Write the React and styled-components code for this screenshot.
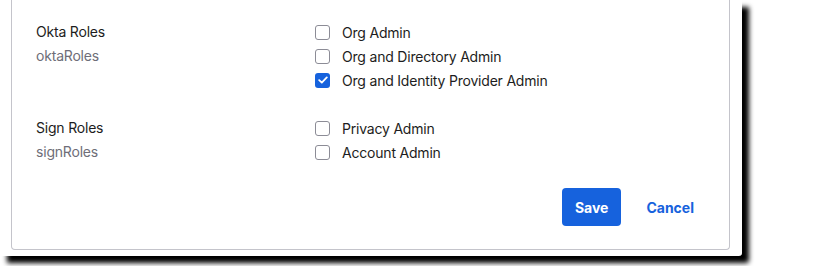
import React from 'react';
import styled, { createGlobalStyle } from 'styled-components';

const GlobalStyle = createGlobalStyle`
  html, body {
    margin: 0;
    min-height: 266px;
    background: #fff;
    font-family: Inter, "Noto Sans", "Liberation Sans", sans-serif;
  }
`;

const Page = styled.div`
  height: 266px;
`;

const Frame = styled.div`
  width: 742px;
  height: 256px;
  box-sizing: border-box;
  background: #fff;
  padding: 0 12px 6px 11px;
  display: flex;
  box-shadow: 7px 7px 5px #000;
  border-radius: 0 0 3px 0;
`;

const Card = styled.div`
  flex: 1;
  display: flex;
  flex-direction: column;
  border: 1px solid #c4c4cb;
  border-top: none;
  border-radius: 0 0 4px 4px;
  padding: 20px 22px 23px 24px;
`;

const Group = styled.div`
  display: grid;
  grid-template-columns: 279px 1fr;
  & + & {
    margin-top: 24px;
  }
`;

const Heading = styled.div`
  display: flex;
  flex-direction: column;
`;

const Title = styled.div`
  font-size: 14px;
  line-height: 24px;
  letter-spacing: -0.2px;
  color: #1d1d21;
`;

const Name = styled.div`
  font-size: 14px;
  line-height: 24px;
  letter-spacing: -0.2px;
  color: #6e6e78;
`;

const Options = styled.div`
  display: flex;
  flex-direction: column;
`;

const Option = styled.label`
  display: flex;
  align-items: center;
  gap: 12px;
  height: 24px;
  font-size: 14px;
  letter-spacing: -0.2px;
  color: #1d1d21;
`;

const Box = styled.span`
  width: 15px;
  height: 15px;
  box-sizing: border-box;
  border-radius: 3px;
  border: ${p => (p.$checked ? 'none' : '1.5px solid #8c8c96')};
  background: ${p => (p.$checked ? '#1662dd' : '#fff')};
  display: flex;
  align-items: center;
  justify-content: center;
`;

const Actions = styled.div`
  margin-top: 24px;
  display: flex;
  justify-content: flex-end;
  gap: 12px;
`;

const Button = styled.button`
  height: 38px;
  padding: 0 13px;
  border: none;
  border-radius: 4px;
  font-family: inherit;
  font-size: 14px;
  font-weight: 700;
  cursor: pointer;
  background: ${p => (p.$primary ? '#1662dd' : 'transparent')};
  color: ${p => (p.$primary ? '#fff' : '#1662dd')};
`;

const Check = ({ checked, children }) => (
  <Option>
    <Box $checked={checked}>
      {checked && (
        <svg width="10" height="8" viewBox="0 0 10 8">
          <path d="M1.2 4.2 L3.8 6.6 L8.8 1.4" fill="none" stroke="#fff" strokeWidth="1.8" strokeLinecap="round" strokeLinejoin="round" />
        </svg>
      )}
    </Box>
    {children}
  </Option>
);

const groups = [
  {
    title: 'Okta Roles',
    name: 'oktaRoles',
    options: [
      ['Org Admin', false],
      ['Org and Directory Admin', false],
      ['Org and Identity Provider Admin', true],
    ],
  },
  {
    title: 'Sign Roles',
    name: 'signRoles',
    options: [
      ['Privacy Admin', false],
      ['Account Admin', false],
    ],
  },
];

export default function App() {
  return (
    <Page>
      <GlobalStyle />
      <Frame>
        <Card>
          {groups.map(g => (
            <Group key={g.name}>
              <Heading>
                <Title>{g.title}</Title>
                <Name>{g.name}</Name>
              </Heading>
              <Options>
                {g.options.map(([label, checked]) => (
                  <Check key={label} checked={checked}>{label}</Check>
                ))}
              </Options>
            </Group>
          ))}
          <Actions>
            <Button $primary>Save</Button>
            <Button>Cancel</Button>
          </Actions>
        </Card>
      </Frame>
    </Page>
  );
}
